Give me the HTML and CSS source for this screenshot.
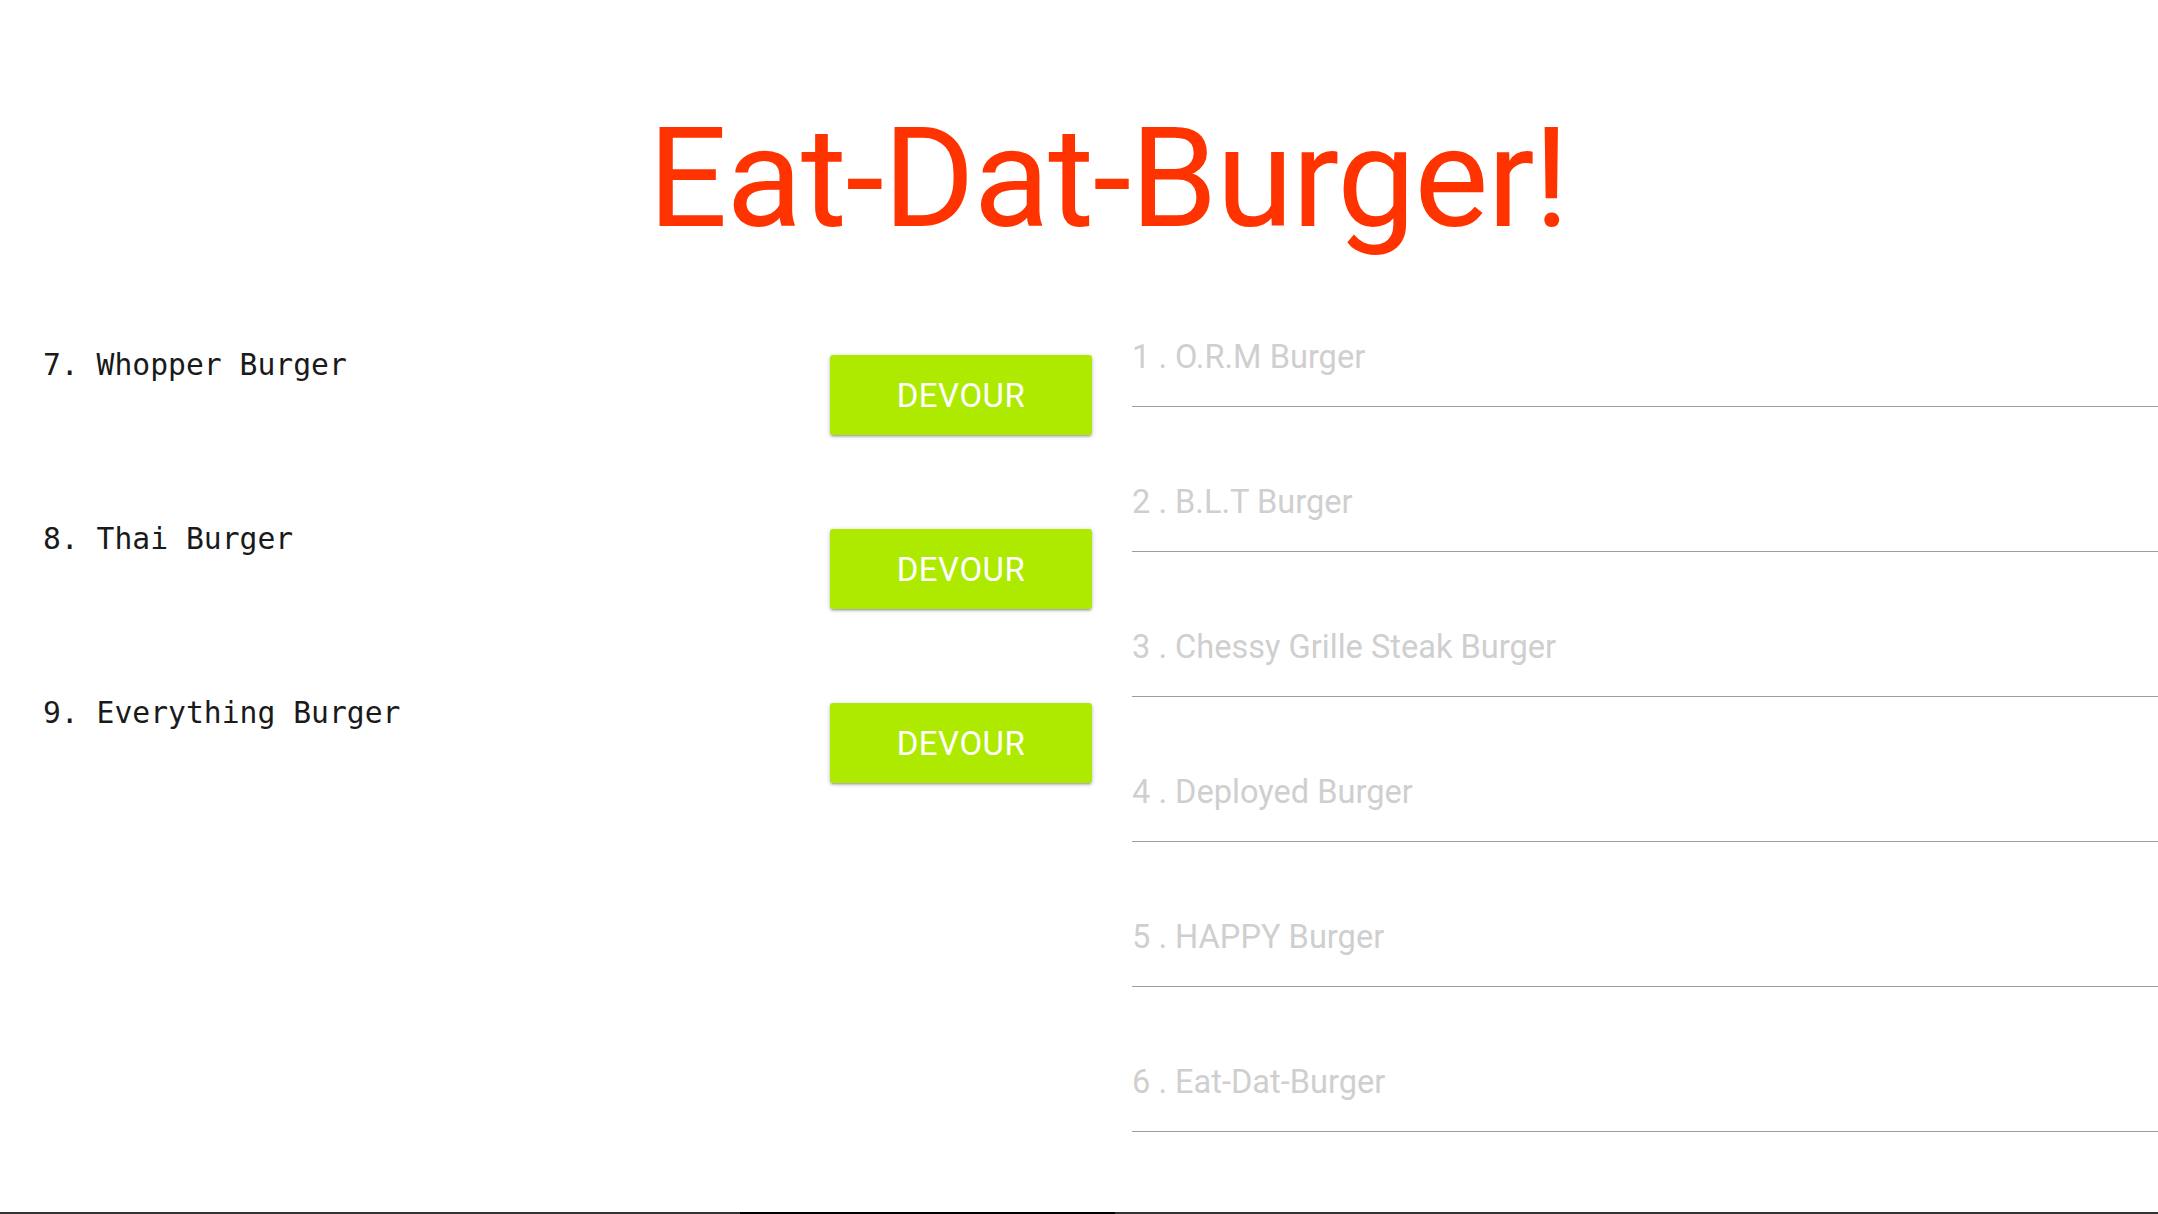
FILE: index.html
```html
<!DOCTYPE html>
<html lang="en">

<head>
    <meta charset="UTF-8">
    <meta name="viewport" content="width=device-width, initial-scale=1.0">
    <title>Eat-Dat-Burger!</title>
    <link rel="stylesheet" href="styles.css">
</head>

<body>
    <h1 class="page-title">Eat-Dat-Burger!</h1>

    <div class="main">
        <!-- burgers waiting to be eaten -->
        <div class="orders">
            <div class="order-row">
                <span class="order-name">7. Whopper Burger</span>
                <button class="devour-btn">Devour</button>
            </div>
            <div class="order-row">
                <span class="order-name">8. Thai Burger</span>
                <button class="devour-btn">Devour</button>
            </div>
            <div class="order-row">
                <span class="order-name">9. Everything Burger</span>
                <button class="devour-btn">Devour</button>
            </div>
        </div>

        <!-- burgers already devoured -->
        <div class="eaten">
            <div class="eaten-item">1 . O.R.M Burger</div>
            <div class="eaten-item">2 . B.L.T Burger</div>
            <div class="eaten-item">3 . Chessy Grille Steak Burger</div>
            <div class="eaten-item">4 . Deployed Burger</div>
            <div class="eaten-item">5 . HAPPY Burger</div>
            <div class="eaten-item">6 . Eat-Dat-Burger</div>
        </div>
    </div>

    <footer class="page-footer">
        <div class="footer-mark"></div>
    </footer>
</body>

</html>
```

FILE: styles.css
```css
html, body {
    height: 100%;
}

body {
    margin: 0;
    font-family: Roboto, "Liberation Sans", sans-serif;
    background-color: #fff;
    display: flex;
    flex-direction: column;
}

.page-title {
    margin: 0;
    padding: 96px 0 0 58px;
    text-align: center;
    font-size: 140px;
    font-weight: 400;
    line-height: normal;
    letter-spacing: -1.3px;
    color: #ff3300;
}

.main {
    margin-top: 78px;
    display: grid;
    grid-template-columns: 1092px 1fr;
    column-gap: 40px;
}

.orders {
    padding: 9px 0 0 43px;
}

.order-row {
    display: flex;
    justify-content: space-between;
    align-items: flex-start;
    margin-bottom: 86px;
}

.order-name {
    font-family: "DejaVu Sans Mono", "Liberation Mono", monospace;
    font-size: 29.7px;
    line-height: 35px;
    color: #1a1a1a;
}

.devour-btn {
    margin-top: 8px;
    width: 262px;
    height: 80px;
    border: none;
    border-radius: 3px;
    background-color: #aeea00;
    color: #fff;
    font-family: Roboto, sans-serif;
    font-size: 33px;
    text-transform: uppercase;
    letter-spacing: 0.5px;
    box-shadow: 0 2px 2px 0 rgba(0, 0, 0, 0.14), 0 3px 1px -2px rgba(0, 0, 0, 0.12), 0 1px 5px 0 rgba(0, 0, 0, 0.2);
    cursor: pointer;
}

.eaten-item {
    font-size: 32.6px;
    line-height: 38px;
    padding-bottom: 30px;
    margin-bottom: 76px;
    border-bottom: 1px solid #9e9e9e;
    color: #cfcfcf;
}

.page-footer {
    margin-top: auto;
    height: 2px;
    background-color: #333;
}

.footer-mark {
    margin-left: 740px;
    width: 375px;
    height: 2px;
    background-color: #000;
}
```
